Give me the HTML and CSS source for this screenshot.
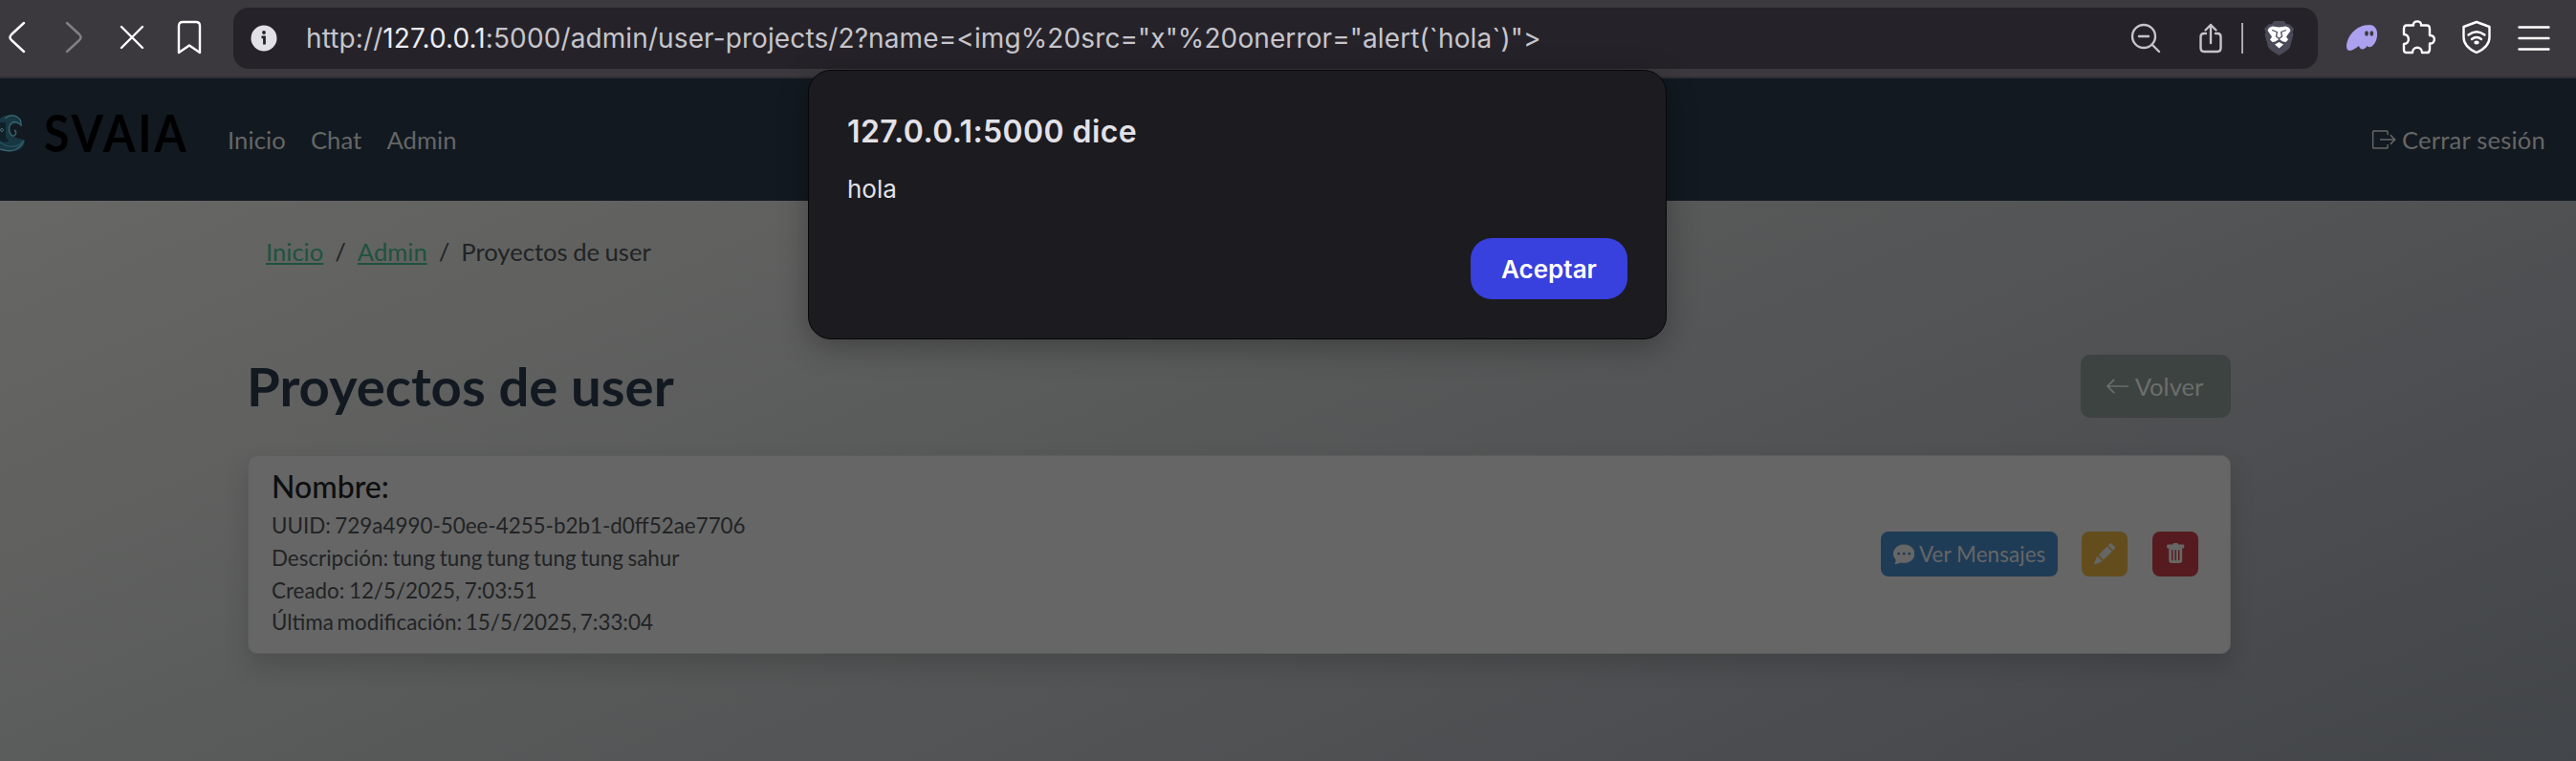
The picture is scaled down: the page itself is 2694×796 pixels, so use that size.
FILE: index.html
```
<!DOCTYPE html>
<html lang="es">
<head>
<meta charset="utf-8">
<title>Proyectos de user</title>
<link rel="stylesheet" href="styles.css">
</head>
<body>
<header class="toolbar">
  <svg class="ico back" viewBox="0 0 20 34"><path d="M17 2 4 14Q1 17 4 20L17 32"/></svg>
  <svg class="ico fwd" viewBox="0 0 20 34"><path d="M3 2 16 14Q19 17 16 20L3 32"/></svg>
  <svg class="ico stop" viewBox="0 0 26 26"><path d="M2 2 24 24M24 2 2 24"/></svg>
  <svg class="ico mark" viewBox="0 0 26 36"><path d="M2 6Q2 2 6 2H20Q24 2 24 6V34L13 26.500 2 34Z"/></svg>
  <div class="address">
    <svg class="info" viewBox="0 0 28 28"><circle cx="14" cy="14" r="13.500" fill="#e3e1e8"/><circle cx="14" cy="8" r="1.900" fill="#252329"/><path d="M11.500 12.800H14.500V20.500" fill="none" stroke="#252329" stroke-width="2.800"/></svg>
    <span class="url">http://<b>127.0.0.1</b>:5000/admin/user-projects/2?name=&lt;img%20src="x"%20onerror="alert(`hola`)"&gt;</span>
    <svg class="ico lens" viewBox="0 0 32 32"><circle cx="14" cy="14" r="12"/><path d="M9 14H19M22.500 22.500 30 30"/></svg>
    <svg class="ico share" viewBox="0 0 24 32"><path d="M7 11H5Q1.500 11 1.500 14.500V26Q1.500 30 5 30H19Q22.500 30 22.500 26V14.500Q22.500 11 19 11H17M12 21V2M6.500 7.500 12 2 17.500 7.500"/></svg>
    <span class="divider"></span>
    <svg class="lion" viewBox="0 0 31 36"><path fill="#4a4a59" d="M8 3 10.500 0H20.500L23 3 26.500 3.500 31 8 29.500 12 30.500 14 27 27Q26 30 15.500 36 5 30 4 27L.5 14 1.500 12 0 8 4.500 3.500Z"/><path fill="#fff" d="M5 7 8.500 5.500 15.500 6.500 22.500 5.500 26 7 27.500 10 23 16.500 25 19.500 22.500 22 19.500 21.500 15.500 19 11.500 21.500 8.500 22 6 19.500 8 16.500 3.500 10Z"/><path fill="#fff" d="M11 24.500 15.500 22 20 24.500 15.500 28.500Z"/><path fill="none" stroke="#4a4a59" stroke-width="1.300" d="M8 9.500 13.500 11.500M23 9.500 17.500 11.500M13.500 11 12.500 16 15.500 18.500 18.500 16 17.500 11M15.500 18.500V20"/></svg>
  </div>
  <svg class="ghost" viewBox="0 0 32 27"><path fill="#aba1ee" d="M0 23C0 13 9 0 24 0 30 0 33 6 32 12 31 20 25 26 21.500 22 19.500 26 14 27 13 22 9 25 5 28 1.500 26.500Q0 26 0 23Z"/><ellipse cx="21" cy="9" rx="1.900" ry="2.700" fill="#3b393e"/><ellipse cx="26.300" cy="9" rx="1.900" ry="2.700" fill="#3b393e"/></svg>
  <svg class="ico puzzle" viewBox="0 0 36 36"><path d="M5 5.500H12C11 0 21 0 20 5.500H26Q29 5.500 29 9V16C35.500 15.500 35.500 25 29 24.500V31Q29 34 26 34H21C21 27 11 27 11 34H5Q2 34 2 31V25C8.500 25 8.500 15 2 15V9Q2 5.500 5 5.500Z"/></svg>
  <svg class="ico shield" viewBox="0 0 30 36"><path d="M15 2 28.500 7V18Q28.500 28 15 34 1.500 28 1.500 18V7Z"/><path d="M6.500 15.500Q15 9 23.500 15.500M10 20Q15 16 20 20"/><ellipse cx="15" cy="23.500" rx="1.500" ry=".8"/></svg>
  <svg class="ico menu" viewBox="0 0 34 26"><path d="M1.500 1.500H32.500M1.500 13H32.500M1.500 24.500H32.500"/></svg>
</header>
<div class="page">
  <nav class="navbar">
    <svg class="wave" viewBox="0 0 28 46"><path fill="#173743" d="M0 8C8 1 22 4 22 17 19 10 8 13 10 22 12 29 21 28 26 31 25 41 16 45 0 41Z"/><path fill="none" stroke="#37636c" stroke-width="1.500" d="M5 8C12 2 23 5 22 16M21 14C14 8 8 14 10 22 13 31 20 23 15 20M0 40C9 43 20 43 25 31"/><path fill="none" stroke="#28545f" stroke-width="1.300" d="M0 33C10 40 19 38 25 31"/><path fill="#0f2029" d="M0 12H6V27L9 32Q4 34 0 31Z"/><circle cx="2" cy="20" r="1.500" fill="none" stroke="#506970"/></svg>
    <span class="brand">SVAIA</span>
    <a>Inicio</a><a>Chat</a><a>Admin</a>
    <span class="logout"><svg viewBox="0 0 16 16"><path d="M10.500 5V3a.5.500 0 0 0-.5-.5H1.500A.5.500 0 0 0 1 3v10a.5.500 0 0 0 .5.500H10a.5.500 0 0 0 .5-.5v-2M5.500 8H15M12.200 5 15.200 8 12.200 11"/></svg>Cerrar sesión</span>
  </nav>
  <main class="container">
    <div class="crumbs"><a>Inicio</a><i>/</i><a>Admin</a><i>/</i><span>Proyectos de user</span></div>
    <div class="heading">
      <h1>Proyectos de user</h1>
      <span class="volver"><svg viewBox="0 0 24 16"><path d="M23.500 8H1M8 1 1 8 8 15"/></svg>Volver</span>
    </div>
    <section class="card">
      <div class="details">
        <h5>Nombre:</h5>
        <p>UUID: 729a4990-50ee-4255-b2b1-d0ff52ae7706</p>
        <p>Descripción: tung tung tung tung tung sahur</p>
        <p>Creado: 12/5/2025, 7:03:51</p>
        <p class="modified">Última modificación: 15/5/2025, 7:33:04</p>
      </div>
      <span class="btn blue"><svg viewBox="0 0 16 16"><path d="M16 8c0 3.866-3.582 7-8 7a9 9 0 0 1-2.347-.306c-.584.296-1.925.864-4.181 1.234-.2.032-.352-.176-.273-.362.354-.836.674-1.950.77-2.966C.744 11.370 0 9.760 0 8c0-3.866 3.582-7 8-7s8 3.134 8 7M5 8a1 1 0 1 0-2 0 1 1 0 0 0 2 0m4 0a1 1 0 1 0-2 0 1 1 0 0 0 2 0m3 1a1 1 0 1 0 0-2 1 1 0 0 0 0 2"/></svg>Ver Mensajes</span>
      <span class="btn yellow"><svg viewBox="0 0 16 16"><path d="M12.854.146a.5.500 0 0 0-.707 0L10.500 1.793 14.207 5.500l1.647-1.646a.5.500 0 0 0 0-.708zm.646 6.061L9.793 2.500 3.293 9H3.500a.5.500 0 0 1 .5.500v.5h.5a.5.500 0 0 1 .5.500v.5h.5a.5.500 0 0 1 .5.500v.5h.5a.5.500 0 0 1 .5.500v.207zm-7.468 7.468A.5.500 0 0 1 6 13.500V13h-.5a.5.500 0 0 1-.5-.5V12h-.5a.5.500 0 0 1-.5-.5V11h-.5a.5.500 0 0 1-.5-.5V10h-.5a.5.500 0 0 1-.175-.032l-.179.178a.5.500 0 0 0-.110.168l-2 5a.5.500 0 0 0 .650.650l5-2a.5.500 0 0 0 .168-.110z"/></svg></span>
      <span class="btn red"><svg viewBox="0 0 16 16"><path d="M2.500 1a1 1 0 0 0-1 1v1a1 1 0 0 0 1 1H3v9a2 2 0 0 0 2 2h6a2 2 0 0 0 2-2V4h.5a1 1 0 0 0 1-1V2a1 1 0 0 0-1-1H10a1 1 0 0 0-1-1H7a1 1 0 0 0-1 1zm3 4a.5.500 0 0 1 .5.500v7a.5.500 0 0 1-1 0v-7a.5.500 0 0 1 .5-.5M8 5a.5.500 0 0 1 .5.500v7a.5.500 0 0 1-1 0v-7A.5.500 0 0 1 8 5m3 .5v7a.5.500 0 0 1-1 0v-7a.5.500 0 0 1 1 0"/></svg></span>
    </section>
  </main>
</div>
<div class="dialog">
  <h2>127.0.0.1:5000 dice</h2>
  <p>hola</p>
  <button>Aceptar</button>
</div>
</body>
</html>
```
FILE: styles.css
```
* { box-sizing: border-box; }
body { margin: 0; width: 2694px; height: 796px; overflow: hidden; display: flex; flex-direction: column; background: #555; font-family: Lato, sans-serif; }
h1, h2, h5, p { margin: 0; }
svg { display: block; flex: none; }
.toolbar { height: 82px; flex: none; display: flex; align-items: center; padding-bottom: 2px; background: #3b393e; border-bottom: 2px solid #302f33; }
.ico { fill: none; stroke: #fff; stroke-width: 2.400; stroke-linecap: round; stroke-linejoin: round; }
.back { width: 20px; height: 34px; margin-left: 8px; }
.fwd { width: 20px; height: 34px; margin-left: 39px; stroke: #828085; }
.stop { width: 26px; height: 26px; margin-left: 38px; }
.mark { width: 26px; height: 36px; margin-left: 34px; }
.address { width: 2180px; height: 64px; margin: 2px 0 0 33px; display: flex; align-items: center; border-radius: 16px; background: #252329; }
.info { width: 28px; height: 28px; margin-left: 18px; }
.url { width: 1860px; margin-left: 30px; font: 28px/64px Inter, sans-serif; letter-spacing: .11px; color: #c7c5cb; white-space: nowrap; }
.url b { font-weight: 400; color: #edebf2; }
.lens { width: 32px; height: 32px; margin-left: 48px; stroke: #c7c5cb; }
.share { width: 24px; height: 32px; margin-left: 40px; stroke: #c7c5cb; }
.divider { width: 2px; height: 32px; margin-left: 20px; background: #aaa8af; }
.lion { width: 31px; height: 36px; margin-left: 22px; }
.ghost { width: 32px; height: 27px; margin-left: 30px; }
.puzzle { width: 36px; height: 36px; margin-left: 26px; }
.shield { width: 30px; height: 36px; margin-left: 27px; }
.menu { width: 34px; height: 26px; margin: 2px 0 0 28px; }
.page { flex: 1; background: linear-gradient(157deg, #676766 0%, #626361 15%, #424549 100%) 0 128px / 100% 586px no-repeat; }
.navbar { height: 128px; display: flex; align-items: center; gap: 26px; padding-right: 32px; background: #121920; color: #666; font-size: 25.600px; letter-spacing: .1px; }
.wave { width: 28px; height: 46px; margin-top: -14px; }
.brand { width: 166px; margin: -14px 0 0 -8px; font: 700 53px/60px Lato, sans-serif; letter-spacing: 3px; color: #000; transform: scaleX(.91); transform-origin: left; }
.logout { margin-left: auto; display: flex; gap: 6px; align-items: center; letter-spacing: .2px; }
.logout svg { width: 26px; height: 26px; fill: none; stroke: #666; stroke-width: .9; }
.container { width: 2074px; margin-left: 259px; }
.crumbs { display: flex; gap: 12px; padding: 38px 0 0 19px; font-size: 25.600px; line-height: 31px; word-spacing: -1px; color: #212325; }
.crumbs i { font-style: normal; }
.crumbs a { color: #1e5240; text-decoration: underline; }
.heading { display: flex; justify-content: space-between; align-items: center; height: 66px; margin-top: 92px; }
h1 { margin: -3px 0 0 -1px; font-size: 56.300px; line-height: 66px; color: #121920; }
.volver { width: 157px; height: 66px; display: flex; justify-content: center; align-items: center; gap: 7px; padding-right: 2px; border-radius: 10px; background: #3d4341; color: #6b6e6d; font-size: 25.600px; }
.volver svg { width: 23px; height: 16px; fill: none; stroke: #6b6e6d; stroke-width: 1.800; stroke-linecap: round; }
.card { height: 208px; margin-top: 39px; display: flex; align-items: center; padding: 0 33px 0 24px; border: 1px solid #5b5c5c; border-radius: 10px; background: #666; box-shadow: 0 13px 26px rgba(0, 0, 0, .15); }
.details { margin: -2px auto 0 0; font-size: 22.400px; line-height: 33.600px; word-spacing: -1.200px; color: #212325; }
.details .modified { word-spacing: -2px; }
h5 { font-size: 32px; line-height: 38px; font-weight: 500; color: #0d0e0f; margin-bottom: 5px; }
.btn { height: 47px; width: 48px; display: flex; align-items: center; justify-content: center; gap: 5px; margin: -1px 0 0 26px; border-radius: 8px; font-size: 22.400px; letter-spacing: .1px; color: #666; }
.btn svg { width: 22.400px; height: 22.400px; fill: #666; }
.blue { width: 185px; background: #1f3c57; }
.yellow { margin-left: 25px; background: #644d1c; }
.red { background: #561b1f; }
.dialog { position: absolute; left: 845px; top: 73px; width: 898px; height: 282px; padding: 44px 40px 0; border: 1px solid #070709; border-radius: 24px; background: #1c1b1f; color: #e3e1e8; font-family: Inter, sans-serif; box-shadow: 0 8px 32px rgba(0, 0, 0, .3); display: flex; flex-direction: column; }
.dialog h2 { font-size: 32px; line-height: 40px; font-weight: 600; letter-spacing: .4px; }
.dialog p { margin-top: 24px; font-size: 26px; line-height: 32px; }
.dialog button { align-self: flex-end; width: 164px; height: 64px; margin-top: 35px; border: 0; border-radius: 22px; background: #3840dd; color: #fff; font: 600 26px Inter, sans-serif; }
```
